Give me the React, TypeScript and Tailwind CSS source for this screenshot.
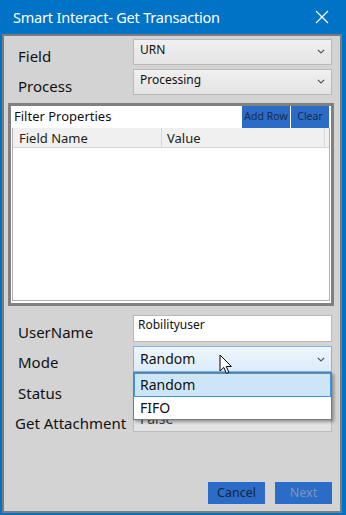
import React from "react";

const font = { fontFamily: '"Noto Sans", "Open Sans", Arial, sans-serif' };

function Chevron() {
  return (
    <svg width="8" height="5" viewBox="0 0 8 5" className="block">
      <polyline points="0.8,0.8 4,4 7.2,0.8" fill="none" stroke="#555" strokeWidth="1.2" />
    </svg>
  );
}

function Select({ value, className = "" }: { value: string; className?: string }) {
  return (
    <div
      className={`h-[26px] w-[199px] border border-[#b9b9b9] bg-gradient-to-b from-[#f0f0f0] to-[#e4e4e4] flex items-start justify-between pl-[6px] pr-[6px] ${className}`}
    >
      <span className="text-[12px] leading-[16px] mt-[2px] text-[#111]">{value}</span>
      <span className="mt-[9px]"><Chevron /></span>
    </div>
  );
}

export default function App() {
  return (
    <div className="w-[346px] h-[515px] bg-[#0173c7] flex flex-col overflow-hidden" style={font}>
      {/* Title bar */}
      <div className="h-[34px] shrink-0 flex items-center justify-between pl-[13px] pr-[17px]">
        <span className="text-white text-[14.5px] leading-[20px] tracking-[-0.2px]">Smart Interact- Get Transaction</span>
        <svg width="14" height="14" viewBox="0 0 14 14">
          <path d="M1 1 L13 13 M13 1 L1 13" stroke="#fff" strokeWidth="1.2" />
        </svg>
      </div>
      {/* Body */}
      <div className="flex-1 ml-[2px] mr-[4px] mb-[2px] border-2 border-[#7b7b7b] bg-[#d3d3d3] relative flex flex-col">
        <div className="pl-[14px] pr-[6px] pt-[3px]">
          <div className="flex h-[30px]">
            <div className="w-[115px] text-[15px] leading-[20px] mt-[7px] text-[#111]">Field</div>
            <Select value="URN" />
          </div>
          <div className="flex h-[30px]">
            <div className="w-[115px] text-[15px] leading-[20px] mt-[7px] text-[#111]">Process</div>
            <Select value="Processing" />
          </div>
        </div>

        {/* Filter properties panel */}
        <div className="ml-[4px] mr-[6px] mt-[4px] h-[203px] border-[3px] border-[#808080] bg-white flex flex-col">
          <div className="h-[22px] flex items-stretch">
            <div className="flex-1 text-[13px] leading-[20px] pl-[3px] text-[#111]">Filter Properties</div>
            <div className="w-[48px] bg-[#2a6cc8] text-[10.5px] text-[#1b2b44] flex items-center justify-center">Add Row</div>
            <div className="w-[1px] bg-white" />
            <div className="w-[38px] bg-[#2a6cc8] text-[10.5px] text-[#1b2b44] flex items-center justify-center">Clear</div>
            <div className="w-[2px] bg-white" />
          </div>
          <div className="flex-1 ml-[1px] mr-[1px] mb-[2px] border border-[#b0b0b0] border-t-0 flex flex-col">
            <div className="h-[20px] bg-[#f0f0f0] border-b border-[#d5d5d5] flex text-[13px] leading-[20px] text-[#222]">
              <div className="w-[149px] border-r border-[#d8d8d8] pl-[6px]">Field Name</div>
              <div className="flex-1 border-r border-[#d8d8d8] pl-[5px]">Value</div>
              <div className="w-[4px]" />
            </div>
            <div className="flex-1 bg-white" />
          </div>
        </div>

        <div className="pl-[14px] pr-[6px] pt-[9px] flex flex-col">
          <div className="flex h-[31px]">
            <div className="w-[115px] text-[15px] leading-[20px] mt-[7px] text-[#111]">UserName</div>
            <div className="h-[27px] w-[199px] border border-[#b9b9b9] bg-white pl-[4px] text-[12px] leading-[16px] pt-[1px] text-[#111]">Robilityuser</div>
          </div>
          <div className="flex h-[31px] relative">
            <div className="w-[115px] text-[15px] leading-[20px] mt-[6px] text-[#111]">Mode</div>
            <div className="h-[26px] w-[199px] border border-[#7eb4ea] bg-gradient-to-b from-[#eef5fc] to-[#dcecfc] flex items-center justify-between pl-[6px] pr-[6px]">
              <span className="text-[14px] leading-[18px] text-[#111]">Random</span>
              <Chevron />
            </div>
          </div>
          <div className="flex h-[31px]">
            <div className="w-[115px] text-[15px] leading-[20px] mt-[6px] text-[#111]">Status</div>
            <div className="h-[26px] w-[199px] border border-[#bcbcbc] bg-[#e3e3e3]" />
          </div>
          <div className="flex h-[28px] -ml-[3px]">
            <div className="w-[118px] text-[15px] leading-[20px] mt-[5px] text-[#111]">Get Attachment</div>
            <div className="h-[24px] w-[199px] border border-[#bcbcbc] bg-[#e3e3e3] pl-[6px] text-[14px] leading-[18px] pt-[1px] text-[#444]">False</div>
          </div>
        </div>

        <div className="flex-1" />
        <div className="flex justify-end gap-[10px] pr-[8px] pb-[7px]">
          <div className="w-[57px] h-[22px] bg-[#2a6cc8] text-[12.5px] text-[#1b2333] flex items-center justify-center">Cancel</div>
          <div className="w-[57px] h-[22px] bg-[#2a6cc8] text-[12.5px] text-[#7f93b3] flex items-center justify-center">Next</div>
        </div>

        {/* Dropdown list overlay */}
        <div className="absolute left-[129px] top-[336px] w-[199px] h-[48px] bg-white border border-[#7a7a7a] shadow-[2px_2px_3px_rgba(0,0,0,0.35)] flex flex-col">
          <div className="h-[24px] bg-[#cde6f7] border border-[#3d95dc] pl-[5px] text-[14px] leading-[22px] text-[#111]">Random</div>
          <div className="h-[23px] pl-[6px] text-[14px] leading-[22px] text-[#111]">FIFO</div>
        </div>

        {/* Mouse cursor */}
        <svg className="absolute left-[215px] top-[318px]" width="14" height="22" viewBox="0 0 14 22">
          <path
            d="M1 1 L1 17 L4.8 13.4 L7.4 19.4 L9.8 18.4 L7.3 12.5 L12.4 12.5 Z"
            fill="#fff"
            stroke="#000"
            strokeWidth="1"
            strokeLinejoin="miter"
          />
        </svg>
      </div>
    </div>
  );
}
